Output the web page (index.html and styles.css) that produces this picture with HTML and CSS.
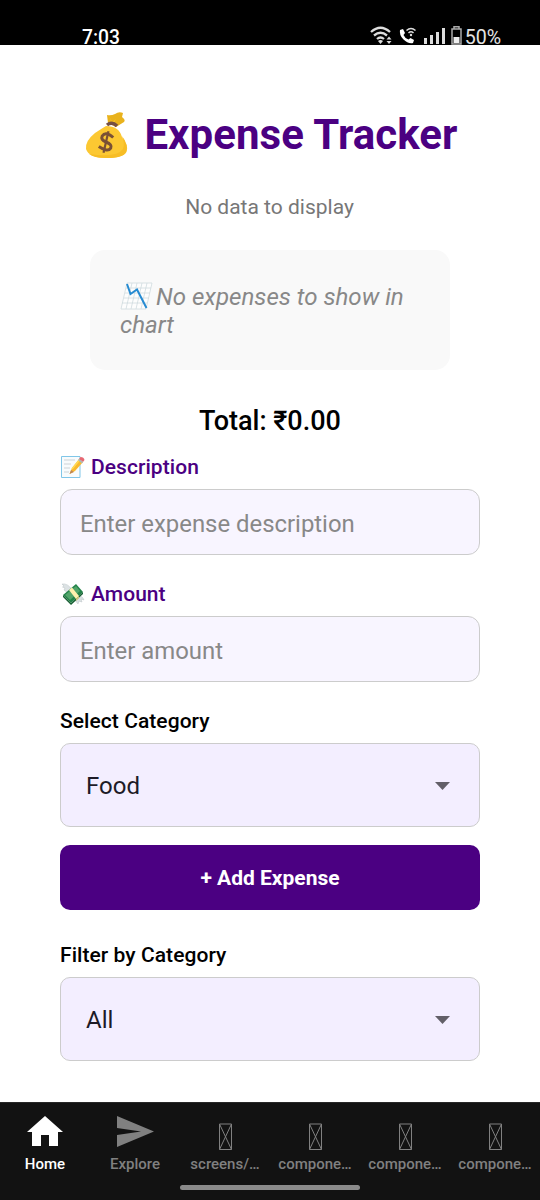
FILE: index.html
```html
<!DOCTYPE html>
<html lang="en">
<head>
<meta charset="utf-8">
<title>Expense Tracker</title>
<link rel="stylesheet" href="styles.css">
</head>
<body>
<header class="status">
  <span class="clock">7:03</span>
  <div class="status-icons">
    <svg class="wifi" width="24" height="20" viewBox="0 0 24 20" fill="none" stroke="#ddd" stroke-width="2.300"><path d="M1 6Q10.500-2.500 20 6M4 9.500Q10.500 4 17 9.500M7 13Q10.500 10 14 13"/><path d="M8 15Q10.500 13 13 15L10.500 18Z" fill="#ddd" stroke="none"/><path d="M16.500 13.500L19 10.500L21.500 13.500ZM16.500 15L19 18L21.500 15Z" fill="#ddd" stroke="none"/></svg>
    <svg class="call" width="18" height="18" viewBox="0 0 18 18" fill="none"><path d="M1 3L4 2L6 6L4.500 8Q6 11.500 9.500 12.500L11.500 11L15 13L14 16Q9 17 4.500 12.500Q0 8 1 3Z" fill="#fff"/><path d="M7.500 3.500Q12-.5 16.500 3.500M9.500 6Q12 3.500 14.500 6" stroke="#ddd" stroke-width="1.500"/><circle cx="12" cy="8" r="1.200" fill="#ddd"/></svg>
    <svg class="signal" width="22" height="17" viewBox="0 0 22 17" fill="#ddd"><path d="M0 10h3v6H0zM6 7h3v9H6zM12 4h3v12h-3zM18 0h3v16h-3z"/></svg>
    <svg class="battery" width="11" height="19" viewBox="0 0 11 19"><path d="M3 2.500V.8H8V2.500M1 3H10V18H1Z" fill="none" stroke="#aaa" stroke-width="1.500"/><path d="M2.500 11h6v6h-6z" fill="#eee"/></svg>
    <span class="percent">50%</span>
  </div>
</header>
<main class="content">
  <h1 class="title">
    <svg width="42" height="47" viewBox="0 0 42 47"><path d="M22 11L21 3Q25 4 29 2Q33-1 37 1L36 5Q40 8 38 10L30 15Z" fill="#e9b21c"/><path d="M23 4L26 11L34 3Q29 7 27 12" fill="#fccc35"/><path d="M20 14Q33 14 36 25Q42 34 41 38Q40 46 20 46Q3 46 0 37Q-1 29 9 21Q15 17 20 14Z" fill="#fcc832"/><path d="M36 24Q43 33 40 40Q37 46 20 46Q8 46 3 42Q31 46 37 37Q39 31 36 24Z" fill="#f7bd25"/><path d="M21 13Q26 9 31 14" fill="none" stroke="#765044" stroke-width="3.500"/><g transform="rotate(13 20 30)" fill="none" stroke="#7a5035" stroke-width="3"><path d="M26 24Q17 19 15 25Q14 29 20 30Q27 31 26 35Q24 40 14 36"/><path d="M20 19V41" stroke-width="2.200"/></g></svg>
    <span>Expense Tracker</span>
  </h1>
  <p class="empty">No data to display</p>
  <section class="chart-empty"><p><svg class="chart-icon" width="34" height="28" viewBox="0 0 34 28" fill="none"><path d="M7 1H32L26 27H1Z" fill="#fdfdfd"/><path d="M7 1H32L26 27H1ZM12 1L6 27M17 1L11 27M22 1L16 27M27 1L21 27M6 6H31M5 11H30M4 16H29M2 21H27" stroke="#cfdade" stroke-width=".8"/><path d="M7 2L10.500 12L17 7.500L26.500 26" stroke="#268bd2" stroke-width="2"/></svg>No expenses to show in chart</p></section>
  <p class="total">Total: ₹0.00</p>
  <div class="field">
    <label class="label purple" for="desc"><svg width="25" height="24" viewBox="0 0 25 24"><path d="M1.500 1.500H20V22.500H1.500Z" fill="#f8fbfc" stroke="#80c6e8"/><path d="M4 5H15M4 9H11M4 13H10M4 17H9" stroke="#ccd3d7"/><path d="M9.500 19L12 13L19 4L23 7L15 16Z" fill="#f9b92d"/><path d="M12 14L19.500 5" stroke="#ffda54" stroke-width="1.500"/><path d="M19 4L20.500 2Q24 2 24.500 5L23 7Z" fill="#e76772"/><path d="M18 5L19 4L23 7L22 8.500Z" fill="#a6b8bf"/><path d="M9.500 19L11 15L14 17Z" fill="#be8555"/></svg><span>Description</span></label>
    <input class="input" id="desc" placeholder="Enter expense description">
  </div>
  <div class="field">
    <label class="label purple" for="amount"><svg width="25" height="24" viewBox="0 0 25 24"><path d="M12 8Q8 1 2 2L4 4L2.500 5L5 6L4 8L8 11ZM17 14Q22 13 24 18L21 17L22 20L19 19L18 22L14 17Z" fill="#dce2e4" stroke="#b9c2c5" stroke-width=".5"/><path d="M3 13L16 2L23 10L11 21Z" fill="#238348"/><path d="M3 13L11 21V23L3 15ZM11 21L23 10V12L11 23Z" fill="#175f33"/><path d="M5 13L16 4L20 9L10 18Z" fill="#52a46a"/><path d="M9 8L12 5.500L19 14L16 17Z" fill="#fff0ad"/><path d="M16 17L19 14V16L16 19Z" fill="#d7c778"/></svg><span>Amount</span></label>
    <input class="input" id="amount" placeholder="Enter amount">
  </div>
  <div class="group">
    <h2 class="label">Select Category</h2>
    <div class="select"><span>Food</span><svg width="15" height="8" viewBox="0 0 15 8"><path d="M0 0H15L7.500 8Z" fill="#625f68"/></svg></div>
  </div>
  <button class="add">+ Add Expense</button>
  <div class="group">
    <h2 class="label">Filter by Category</h2>
    <div class="select"><span>All</span><svg width="15" height="8" viewBox="0 0 15 8"><path d="M0 0H15L7.500 8Z" fill="#625f68"/></svg></div>
  </div>
</main>
<nav class="tabs">
  <div class="tab active"><svg width="36" height="36" viewBox="0 0 36 36"><path d="M18 3L36 19H31V33H22V22H14V33H5V19H0Z" fill="#fff"/></svg><span>Home</span></div>
  <div class="tab"><svg width="38" height="36" viewBox="0 0 38 36"><path d="M1 3L38 18.500L1 34V22L25 18.500L1 15Z" fill="#808080"/></svg><span>Explore</span></div>
  <div class="tab"><svg width="36" height="36" viewBox="0 0 36 36"><path d="M12.500 11H24.500V36.500H12.500Z" class="missing"/><path d="M12.500 11L24.500 36.500M24.500 11L12.500 36.500" class="missing"/></svg><span>screens/…</span></div>
  <div class="tab"><svg width="36" height="36" viewBox="0 0 36 36"><path d="M12.500 11H24.500V36.500H12.500Z" class="missing"/><path d="M12.500 11L24.500 36.500M24.500 11L12.500 36.500" class="missing"/></svg><span>compone…</span></div>
  <div class="tab"><svg width="36" height="36" viewBox="0 0 36 36"><path d="M12.500 11H24.500V36.500H12.500Z" class="missing"/><path d="M12.500 11L24.500 36.500M24.500 11L12.500 36.500" class="missing"/></svg><span>compone…</span></div>
  <div class="tab"><svg width="36" height="36" viewBox="0 0 36 36"><path d="M12.500 11H24.500V36.500H12.500Z" class="missing"/><path d="M12.500 11L24.500 36.500M24.500 11L12.500 36.500" class="missing"/></svg><span>compone…</span></div>
  <div class="home-bar"></div>
</nav>
</body>
</html>
```
FILE: styles.css
```css
* { box-sizing: border-box; }
body { margin: 0; height: 1200px; display: flex; flex-direction: column; background: #fff; font-family: Roboto, sans-serif; color: #000; overflow: hidden; }
h1, h2, p { margin: 0; }
svg { display: block; flex: none; overflow: visible; }
.status { height: 45px; flex: none; background: #000; color: #e4e4e4; display: flex; justify-content: space-between; padding: 26px 39px 0 82px; font-size: 20px; line-height: 23px; }
.clock { font-weight: 500; font-size: 19.3px; line-height: 24px; color: #fff; }
.percent { font-size: 19.6px; line-height: 24px; }
.status-icons { display: flex; align-items: flex-start; }
.wifi { margin-right: 5px; }
.call { margin: 1px 7px 0 0; }
.signal { margin: 2px 5px 0 0; }
.battery { margin-right: 3px; }
.content { height: 1057px; flex: none; padding: 65px 60px 0; display: flex; flex-direction: column; }
.title { height: 50px; display: flex; align-items: center; justify-content: center; gap: 16px; padding: 0 0 0 4px; color: #4b0082; font-size: 42px; line-height: 50px; font-weight: 700; letter-spacing: .06px; white-space: nowrap; }
.empty { margin-top: 34px; height: 25px; line-height: 26px; font-size: 21px; color: #777; text-align: center; padding-right: 1px; }
.chart-empty { width: 360px; height: 120px; margin: 31px auto 0; padding: 32px 28px 0 30px; border-radius: 15px; background: #f9f9f9; color: #888; font-size: 24.1px; line-height: 28px; font-style: italic; }
.chart-icon { display: inline-block; vertical-align: -5px; margin-right: 2px; }
.total { margin-top: 35px; height: 32px; text-align: center; font-size: 27px; line-height: 32px; font-weight: 500; }
.field { margin-top: 18px; height: 100px; }
.field + .field { margin-top: 27px; }
.label { height: 24px; display: flex; align-items: center; font-size: 21px; line-height: 24px; font-weight: 500; letter-spacing: .06px; gap: 6px; }
.purple { color: #4b0082; }
.input { display: block; width: 100%; height: 66px; margin-top: 10px; padding: 3px 19px 0; border: 1.5px solid #ccc; border-radius: 12px; background: #f8f5ff; font: 23.9px Roboto, sans-serif; outline: 0; }
.input::placeholder { color: #888; opacity: 1; }
.group { margin-top: 27px; }
.select { height: 84px; margin-top: 10px; border: 1.5px solid #ccc; border-radius: 10px; background: #f3eeff; display: flex; align-items: center; justify-content: space-between; padding: 2px 29px 0 25px; font-size: 24px; color: #1d1b27; }
.add { margin-top: 18px; height: 65px; flex: none; border: 0; border-radius: 10px; background: #4b0082; color: #fff; font: 700 21px Roboto, sans-serif; }
.add + .group { margin-top: 33px; }
.tabs { position: relative; height: 98px; flex: none; background: #121212; display: grid; grid-template-columns: repeat(6, 90px); border-top: 1px solid #272727; padding-top: 10px; color: #808080; }
.tab { display: flex; flex-direction: column; align-items: center; font-size: 15px; line-height: 18px; font-weight: 500; gap: 6px; }
.active { color: #fff; }
.missing { fill: none; stroke: #808080; stroke-width: 1; }
.home-bar { position: absolute; left: 180px; top: 82px; width: 180px; height: 5px; border-radius: 3px; background: #8a8a8a; }
```
